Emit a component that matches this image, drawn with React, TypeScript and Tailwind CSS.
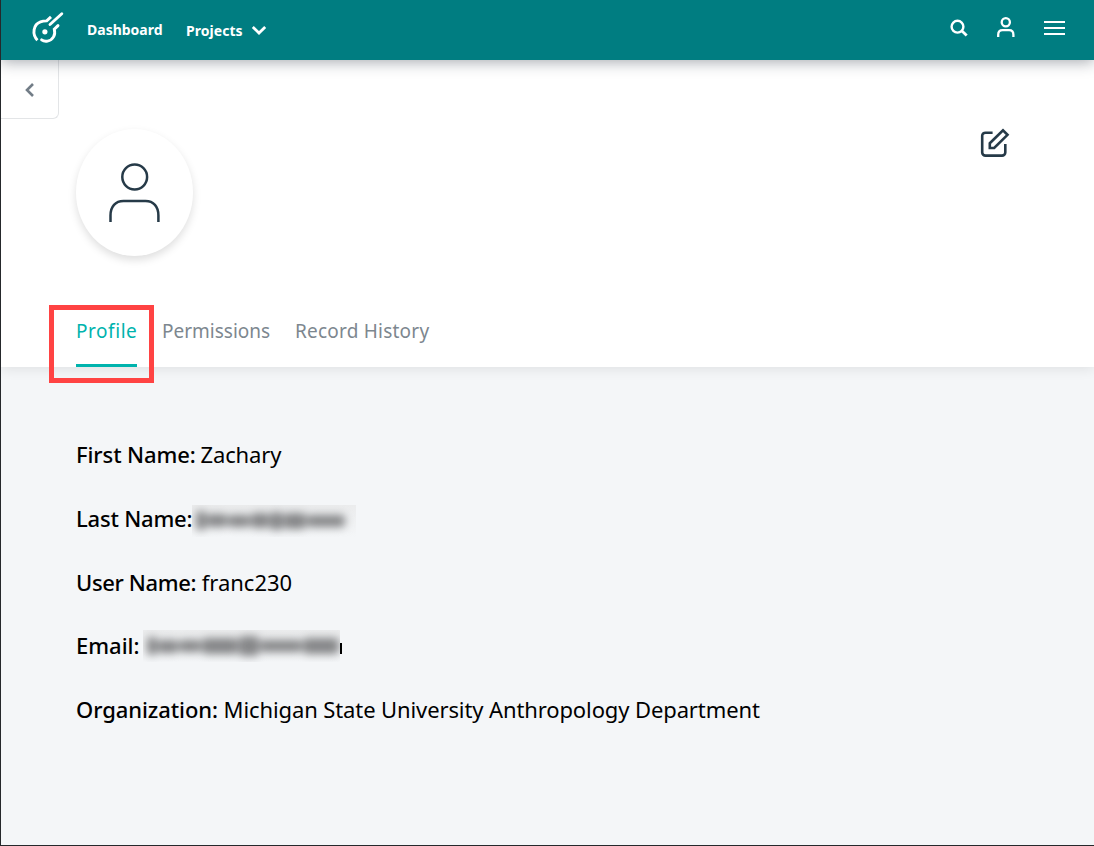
import React from "react";

function Logo() {
  return (
    <svg className="h-[34px] w-[34px]" viewBox="0 0 34 34" fill="none" stroke="white" strokeWidth="2.9">
      <path d="M7.4 30.2C1.8 24.2 3.2 14.5 10.5 11.9c2.3-.8 4.2-.9 6.200-1l4.300-4" />
      <path d="M20 14.500L31.800 3.800" strokeLinecap="round" />
      <path d="M28 15.600L24.300 19.300c1.500 5.400-1.300 10.800-6.800 11.800-2.200.4-4.200 0-5.900-1.300" strokeLinecap="round" />
      <circle cx="14.900" cy="21.800" r="2.600" fill="white" stroke="none" />
    </svg>
  );
}

function Header() {
  return (
    <header className="relative z-10 flex h-[60px] shrink-0 items-start bg-[#007d81] font-bold text-white shadow-[0_2px_14px_rgba(30,40,55,0.4)]">
      <div className="ml-[29px] mt-[10px]"><Logo /></div>
      <span className="ml-[23px] mt-[20px] w-[75px] whitespace-nowrap text-[14px] leading-5">Dashboard</span>
      <span className="ml-6 mt-[21px] w-[58px] whitespace-nowrap text-[14px] leading-5 tracking-[0.05px]">Projects</span>
      <svg className="ml-[7px] mt-[24px] h-3 w-4" viewBox="0 0 16 12" fill="none" stroke="white" strokeWidth="2.8">
        <path d="M1.800 3l6.200 6 6.200-6" />
      </svg>
      <svg className="ml-auto mt-[19px] h-[18px] w-[18px]" viewBox="0 0 18 18" fill="none" stroke="white" strokeWidth="2.4">
        <circle cx="7.5" cy="7.7" r="5.9" />
        <path d="M11.7 11.8l5 4.800" strokeWidth="2.8" />
      </svg>
      <svg className="ml-[28px] mt-[16px] h-[22px] w-5" viewBox="0 0 20 22" fill="none" stroke="white" strokeWidth="2.3">
        <circle cx="9.800" cy="6.300" r="4.100" />
        <path d="M2.200 21v-2.200c0-3 1.600-4.600 4.300-4.600h6.600c2.700 0 4.300 1.600 4.300 4.600V21" />
      </svg>
      <svg className="ml-[28px] mr-[29px] mt-[20px] h-4 w-[21px]" viewBox="0 0 21 16" stroke="white" strokeWidth="2">
        <path d="M0 2h21M0 8h21M0 14h21" />
      </svg>
    </header>
  );
}

function Avatar() {
  return (
    <div className="flex h-[127px] w-[117px] items-center justify-center rounded-[50%] bg-white shadow-[0_4px_8px_rgba(0,0,0,0.13)]">
      <svg className="h-[60px] w-[52px]" viewBox="0 0 52 60" fill="none" stroke="#263a48" strokeWidth="2.5">
        <circle cx="25.700" cy="14" r="12.4" />
        <path d="M1.500 59v-6.500C1.500 43.500 6.500 38 14.500 38h22c8 0 12.900 5.500 12.900 14.500V59" />
      </svg>
    </div>
  );
}

function EditIcon() {
  return (
    <svg className="h-[30px] w-[30px]" viewBox="0 0 30 30" fill="none" stroke="#263a48" strokeWidth="2.6">
      <path d="M12.600 4.700H5.500c-1.800 0-3.300 1.300-3.300 3.100V24.500c0 1.800 1.500 3.100 3.300 3.100H22c1.800 0 3.300-1.300 3.300-3.100V16" />
      <path d="M9.800 15.300L23 2.300 27.500 6.800 14.200 20H9.800z" />
    </svg>
  );
}

function Row({ label, labelClass, children }: { label: string; labelClass: string; children: React.ReactNode }) {
  return (
    <div className="flex h-[63.75px] items-center whitespace-pre text-[22px] text-black">
      <span className={`shrink-0 font-medium ${labelClass}`}>{label}</span>
      {children}
    </div>
  );
}

type Smudge = { w: number; h: number };

function Redacted({ className, parts }: { className: string; parts: Smudge[] }) {
  return (
    <span className={`flex h-8 overflow-hidden bg-linear-to-b from-[#ebeced] to-[#f4f6f8] pl-1 ${className}`}>
      <span className="flex h-full items-center gap-px blur-[4px]">
        {parts.map((p, i) => (
          <span key={i} className="shrink-0 rounded-sm bg-[#858688]" style={{ width: p.w, height: p.h }} />
        ))}
      </span>
    </span>
  );
}

const lastNameParts: Smudge[] = [
  { w: 10, h: 19 }, { w: 20, h: 13 }, { w: 22, h: 12 }, { w: 18, h: 15 },
  { w: 13, h: 18 }, { w: 22, h: 16 }, { w: 38, h: 12 },
];

const emailParts: Smudge[] = [
  { w: 10, h: 18 }, { w: 20, h: 13 }, { w: 22, h: 12 }, { w: 36, h: 16 },
  { w: 20, h: 20 }, { w: 42, h: 12 }, { w: 36, h: 16 },
];

export default function App() {
  return (
    <div className="flex h-[846px] w-[1094px] flex-col overflow-hidden border-b border-l border-[#25282b] bg-[#f4f6f8] font-['Noto_Sans',sans-serif]">
      <Header />
      <section className="relative flex h-[307px] shrink-0 flex-col bg-white shadow-[0_2px_12px_rgba(0,0,0,0.09)]">
        <button className="flex h-[59px] w-[58px] shrink-0 items-center justify-center rounded-br-md border-b border-r border-[#e3e5e7]">
          <svg className="mt-[2px] h-4 w-3" viewBox="0 0 12 16" fill="none" stroke="#727d87" strokeWidth="2.6">
            <path d="M9 2L3 8l6 6" />
          </svg>
        </button>
        <div className="ml-[75px] mr-[84px] mt-[10px] flex items-start justify-between">
          <Avatar />
          <div className="-mt-px"><EditIcon /></div>
        </div>
        <nav className="ml-[75px] mt-auto flex h-[54px] items-start whitespace-nowrap text-[19px] text-[#7d878f]">
          <span className="relative h-full w-[61px] border-b-[3px] border-[#00b3ad] leading-9 tracking-[0.55px] text-[#00b3ad]">
            Profile
            <span className="absolute -left-[27px] -top-[8px] h-[78px] w-[105px] border-[5px] border-[#ff4343]" />
          </span>
          <span className="ml-[25px] w-[108px] leading-9">Permissions</span>
          <span className="ml-[25px] leading-9 tracking-[0.22px]">Record History</span>
        </nav>
      </section>
      <main className="ml-[75px] mt-[56px] flex flex-col">
        <Row label="First Name:" labelClass="w-[119px] tracking-[-0.1px]"><span className="tracking-[-0.15px]"> Zachary</span></Row>
        <Row label="Last Name:" labelClass="w-[116px] tracking-[-0.2px]"><Redacted className="mt-1 w-[164px]" parts={lastNameParts} /></Row>
        <Row label="User Name:" labelClass="w-[120px] tracking-[-0.35px]"><span> franc230</span></Row>
        <Row label="Email:" labelClass="-mt-px w-[67px]">
          <Redacted className="w-[197px]" parts={emailParts} />
          <span className="mt-1 h-[11px] w-[2px] bg-black" />
        </Row>
        <Row label="Organization:" labelClass="w-[142px] tracking-[-0.08px]"><span className="tracking-[-0.11px]"> Michigan State University Anthropology Department</span></Row>
      </main>
    </div>
  );
}
